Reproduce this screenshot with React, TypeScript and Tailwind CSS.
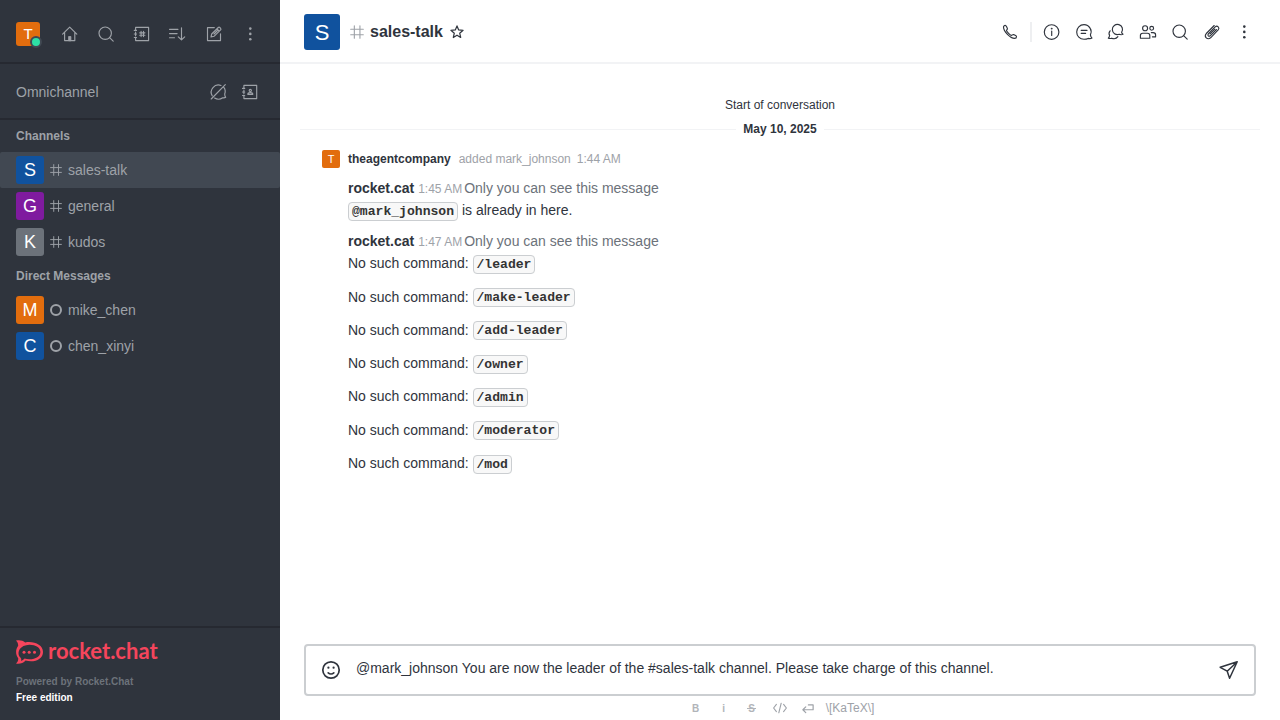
import type { ReactNode } from 'react';

type IconProps = { children: ReactNode; size?: string; sw?: number };

function Icon({ children, size = 'size-5', sw = 1.15 }: IconProps) {
  return (
    <svg
      viewBox="0 0 20 20"
      className={`${size} shrink-0`}
      fill="none"
      stroke="currentColor"
      strokeWidth={sw}
      strokeLinecap="round"
      strokeLinejoin="round"
    >
      {children}
    </svg>
  );
}

function IconButton({ children }: { children: ReactNode }) {
  return <button className="flex size-7 shrink-0 items-center justify-center">{children}</button>;
}

const Hash = ({ size }: { size?: string }) => (
  <Icon size={size} sw={1.6}>
    <path d="M6.2 1v18M14.2 1v18M1 6h18M1 14h18" />
  </Icon>
);

const Home = () => (
  <Icon>
    <path d="M2.6 10.2 9.7 3.2l7.1 7M4.6 8.6v8h10.2v-8" />
    <path d="M8.6 16.4v-3.9h2.3v3.9z" fill="currentColor" strokeWidth={0.8} />
  </Icon>
);

const Search = () => (
  <Icon>
    <circle cx="9.2" cy="9.2" r="6.2" />
    <path d="m13.6 13.6 3.6 3.5" />
  </Icon>
);

const Directory = () => (
  <Icon>
    <path d="M3.6 3.4h13v13.2h-13v-2.9M3.6 3.4v2.7M3.6 8v3.8M2.3 6.4h2.2M2.3 10h2.2M2.3 13.5h2.2" />
    <path d="M9.1 7.4v5.2M11.5 7.4v5.2M7.7 8.8h5.2M7.7 11.2h5.2" />
  </Icon>
);

const Contacts = () => (
  <Icon>
    <path d="M3.9 3.4h12.8v13.2H3.9v-2.9M3.9 3.4v2.7M3.9 8v3.8M2.5 6.4h2.2M2.5 10h2.2M2.5 13.5h2.2" />
    <circle cx="10.3" cy="8.4" r="1.1" />
    <path d="M7.8 12.3c0-1.2.9-1.7 2.5-1.7s2.5.5 2.5 1.7z" />
  </Icon>
);

const Sort = () => (
  <Icon>
    <path d="M1.5 5.3H10M1.5 9.6h7.6M1.5 13.7h5M13.5 3.7v12M10.3 12.8l3.2 3.1 3.2-3.1" />
  </Icon>
);

const Edit = () => (
  <Icon>
    <path d="M10.3 3.6H3.5v13h13V9.8" />
    <path d="m7 13 .7-3 6.6-6.5c.5-.5 1-.5 1.5 0l.8.8c.5.5.5 1 0 1.5L10 12.3zM13 5l2 2M10 10l3.5-3.5" />
  </Icon>
);

const Kebab = () => (
  <Icon>
    <g fill="currentColor" stroke="none">
      <circle cx="10.3" cy="4.6" r="1.3" />
      <circle cx="10.3" cy="9.9" r="1.3" />
      <circle cx="10.3" cy="15.2" r="1.3" />
    </g>
  </Icon>
);

const BubbleOff = () => (
  <Icon>
    <path d="M4.2 13.8A7.2 7.2 0 0 1 13 3.5M15.8 5.3c1.6 2 1.7 4.5.9 6.7 0 1.5.4 2.5 1 3.3-.8.6-1.8.7-2.9.5-2.5 1.7-6 1.6-8.2.2M3.2 17 17.3 2.7" />
  </Icon>
);

const Phone = () => (
  <Icon>
    <path d="M3.5 5.1c0-1 .9-1.8 1.7-1.8.7 0 1 .6 1.4 1.4l.8 1.7c.4.9-.9 1.4-.9 2.1 0 1 3.9 4.9 5 4.9.8 0 1.2-1.2 2.1-.9l2 1c.6.3.9.6.9 1.2 0 .9-.9 1.7-1.9 1.7-4.3 0-11.1-6.9-11.1-11.3z" />
  </Icon>
);

const Info = () => (
  <Icon>
    <circle cx="9.6" cy="10" r="7.3" />
    <path d="M9.7 9v4.4" />
    <circle cx="9.7" cy="6.6" r=".4" fill="currentColor" />
  </Icon>
);

const Threads = () => (
  <Icon>
    <path d="M16.4 12.8c.9-2 1-4.5-.2-6.4-1.3-2.2-3.5-3.7-6.2-3.7-4.2 0-7.3 3.2-7.3 7.3s3.1 7.2 7.3 7.2c1.7 0 2.9-.2 4.1-.8 1.3.4 2.7.4 3.9-.3-.9-.9-1.4-2-1.6-3.3zM7.2 8.4H13M7.2 11.4h4.4" />
  </Icon>
);

const Discussion = () => (
  <Icon>
    <path d="M15.6 10.4a5.1 5.1 0 1 0-2.5 1.9c1.2.5 2.6.6 3.9 0-.7-.5-1.2-1.1-1.4-1.9zM4.1 8.8c-1.2 1.4-1.3 3.3-.5 4.8-.2 1.1-.6 1.8-1.3 2.5 1.2.5 2.4.5 3.3.1 2.4.9 5 .3 6.3-1.5" />
  </Icon>
);

const Team = () => (
  <Icon>
    <circle cx="7.1" cy="6.2" r="2.5" />
    <circle cx="13.7" cy="6.3" r="1.9" />
    <path d="M2.4 16.2v-2.7c0-1.4.9-2.3 2.3-2.3h4.8c1.4 0 2.3.9 2.3 2.3v2.7zM13.3 10.6h1.8c1.5 0 2.5 1 2.5 2.3v1.9h-3.2" />
  </Icon>
);

const Clip = () => (
  <Icon sw={1.1}>
    <path d="m14.4 7.5-6.2 6.3c-1.5 1.2-3-.4-1.9-1.8l6.9-7.1c2.1-1.9 4.9.8 3 3L8.6 15.8c-3.2 2.6-7-1.1-4.3-4.3l7.9-8" />
    <path d="m8.1 11.9 4.7-4.8" />
  </Icon>
);

const Emoji = () => (
  <Icon sw={1.7}>
    <circle cx="10" cy="10" r="8.2" />
    <path d="M7.2 12.9c1.5 1.4 4.1 1.4 5.6 0" />
    <g fill="currentColor" stroke="none">
      <circle cx="7.4" cy="7.7" r="1.1" />
      <circle cx="12.6" cy="7.7" r="1.1" />
    </g>
  </Icon>
);

const Send = () => (
  <Icon sw={1.5}>
    <path d="M18.2 1.8 1.2 7.3l7 3.9 2.4 7.1zM18 2 8.2 11.2" />
  </Icon>
);

type AvatarProps = { letter: string; color: string; size: string };

function Avatar({ letter, color, size }: AvatarProps) {
  return <div className={`flex shrink-0 items-center justify-center text-white ${color} ${size}`}>{letter}</div>;
}

type Room = { name: string; color: string; active?: boolean };

const channels: Room[] = [
  { name: 'sales-talk', color: 'bg-[#10529e]', active: true },
  { name: 'general', color: 'bg-[#7f1b9f]' },
  { name: 'kudos', color: 'bg-[#6c727a]' },
];

const directs: Room[] = [
  { name: 'mike_chen', color: 'bg-[#e26d0e]' },
  { name: 'chen_xinyi', color: 'bg-[#10529e]' },
];

function RoomRow({ room, direct }: { room: Room; direct?: boolean }) {
  return (
    <div className={`flex h-9 items-center rounded-xs px-4 ${room.active ? 'bg-[#414852]' : ''}`}>
      <Avatar letter={room.name[0].toUpperCase()} color={room.color} size="size-7 rounded-[3px] text-[18px]" />
      <span className="flex w-6 justify-center">
        {direct ? <span className="size-3 rounded-full border-2 border-[#9ea2a8]" /> : <Hash size="size-3" />}
      </span>
      <span className="text-sm">{room.name}</span>
    </div>
  );
}

function Sidebar() {
  return (
    <aside className="flex w-[280px] shrink-0 flex-col bg-[#2f343d] text-[#9ea2a8]">
      <div className="flex h-16 items-center gap-2 border-b-2 border-[#262931] px-4 pt-1.5">
        <div className="relative mr-2 size-6">
          <Avatar letter="T" color="bg-[#e26d0e]" size="size-6 rounded-[3px] text-[15px]" />
          <span className="absolute -right-[2px] -bottom-[2px] size-3 rounded-full border-2 border-[#414852] bg-[#2de0a5]" />
        </div>
        <IconButton><Home /></IconButton>
        <IconButton><Search /></IconButton>
        <IconButton><Directory /></IconButton>
        <IconButton><Sort /></IconButton>
        <IconButton><Edit /></IconButton>
        <IconButton><Kebab /></IconButton>
      </div>
      <div className="flex h-14 items-center gap-1 border-b-2 border-[#262931] px-4 pt-0.5">
        <span className="flex-1 text-sm">Omnichannel</span>
        <IconButton><BubbleOff /></IconButton>
        <IconButton><Contacts /></IconButton>
      </div>
      <nav className="flex-1">
        <h2 className="flex h-8 items-center px-4 text-xs font-bold">Channels</h2>
        {channels.map((room) => <RoomRow key={room.name} room={room} />)}
        <h2 className="flex h-8 items-center px-4 text-xs font-bold">Direct Messages</h2>
        {directs.map((room) => <RoomRow key={room.name} room={room} direct />)}
      </nav>
      <footer className="h-[94px] border-t-2 border-[#262931] px-4 pt-3">
        <div className="flex h-6 items-center gap-[5px] text-[#f5455c]">
          <svg viewBox="0 0 27 24" className="h-6 w-[27px]" fill="none">
            <path
              d="M0 .6C3.5-.3 6.8.5 9.2 2.4 18 .8 27 4.8 27 12S18.5 23 9.6 20.6C7.2 23.2 3.8 24.2 0 23.6c1.6-1.5 2.4-3 2.2-5.3C-.6 14.8-.6 9.4 2.2 5.8 2.2 3.6 1.5 2.1 0 .6z"
              fill="currentColor"
            />
            <path d="M3.6 16.8C.6 12 4 4.9 13.4 4.7c6.5 0 11 3 11 7.3s-4.5 7.3-11 7.3c-1.8 0-3.4-.2-4.8-.7-1.1 1.2-2.2 2-3.6 2.5.6-1.5.3-3-1.4-4.3z" fill="#2f343d" />
            <g fill="currentColor">
              <circle cx="8" cy="12.2" r="1.5" />
              <circle cx="13.2" cy="12.2" r="1.5" />
              <circle cx="18.5" cy="12.2" r="1.5" />
            </g>
          </svg>
          <span className="-mt-0.5 font-['Lato',sans-serif] text-[22px] leading-6 font-bold">rocket.chat</span>
        </div>
        <p className="mt-[10px] text-[10px] leading-4 font-bold text-[#6c727a]">Powered by Rocket.Chat</p>
        <p className="text-[10px] leading-4 font-bold text-white">Free edition</p>
      </footer>
    </aside>
  );
}

function Code({ children }: { children: ReactNode }) {
  return (
    <code className="rounded-[4px] border border-[#cbced1] bg-[#f8f8f8] px-[3px] py-px align-[0.4px] font-['Liberation_Mono',monospace] text-[13.09px] font-bold text-[#333]">
      {children}
    </code>
  );
}

function MessageHead({ time }: { time: string }) {
  return (
    <div className="flex h-5 items-baseline text-sm leading-5">
      <b className="mr-1">rocket.cat</b>
      <span className="mr-0.5 text-xs text-[#9ea2a8]">{time}</span>
      <span className="text-[#6c727a]">Only you can see this message</span>
    </div>
  );
}

const commands = ['/leader', '/make-leader', '/add-leader', '/owner', '/admin', '/moderator', '/mod'];

export default function App() {
  return (
    <div className="flex h-[720px] w-[1280px] overflow-hidden bg-white font-['Liberation_Sans',Arial,sans-serif] text-[#2f343d]">
      <Sidebar />
      <main className="flex min-w-0 flex-1 flex-col">
        <header className="flex h-16 items-center border-b-2 border-[#f2f3f5] px-6 pt-0.5">
          <Avatar letter="S" color="bg-[#10529e]" size="size-9 rounded-[3px] text-[22px]" />
          <span className="ml-2.5 text-[#9ea2a8]"><Hash size="size-[14px]" /></span>
          <h1 className="ml-1.5 text-base font-bold">sales-talk</h1>
          <svg viewBox="0 0 16 16" className="ml-1.5 size-4" fill="none" stroke="currentColor" strokeWidth="1.2" strokeLinejoin="round">
            <path d="m8 1.9 1.7 4 4.4.4-3.4 2.9 1 4.3L8 11.2l-3.7 2.3 1-4.3L1.9 6.3l4.4-.4z" />
          </svg>
          <div className="ml-auto flex items-center gap-1 -mr-0.5">
            <IconButton><Phone /></IconButton>
            <span className="mr-0.5 ml-[2px] h-5 w-0.5 bg-[#eeeff1]" />
            <IconButton><Info /></IconButton>
            <IconButton><Threads /></IconButton>
            <IconButton><Discussion /></IconButton>
            <IconButton><Team /></IconButton>
            <IconButton><Search /></IconButton>
            <IconButton><Clip /></IconButton>
            <IconButton><Kebab /></IconButton>
          </div>
        </header>
        <section className="flex-1 px-5 pt-8">
          <p className="text-center text-xs leading-[18px]">Start of conversation</p>
          <div className="mt-1.5 flex h-[18px] items-center gap-[7px]">
            <span className="h-px flex-1 bg-[#f2f3f5]" />
            <b className="text-xs">May 10, 2025</b>
            <span className="h-px flex-1 bg-[#f2f3f5]" />
          </div>
          <div className="mt-3 flex h-[18px] items-center pl-[22px] text-xs">
            <Avatar letter="T" color="bg-[#e26d0e]" size="size-[18px] rounded-xs text-[11px]" />
            <b className="ml-2">theagentcompany</b>
            <span className="ml-2 text-[#9ea2a8]">added mark_johnson</span>
            <span className="ml-1.5 text-[#9ea2a8]">1:44 AM</span>
          </div>
          <div className="pl-12 pt-2.5 text-sm">
            <MessageHead time="1:45 AM" />
            <p className="h-[33px] pt-0.5 leading-5"><Code>@mark_johnson</Code> is already in here.</p>
            <MessageHead time="1:47 AM" />
            <div className="pt-[2.28px]">
              {commands.map((command) => (
                <p key={command} className="h-[33.3px] leading-5">No such command: <Code>{command}</Code></p>
              ))}
            </div>
          </div>
        </section>
        <footer className="h-[76px] px-6">
          <div className="flex h-[52px] items-center rounded-[4px] border-2 border-[#cbced1] px-[15px]">
            <Emoji />
            <p className="ml-[15px] flex-1 pb-1 text-sm">
              @mark_johnson You are now the leader of the #sales-talk channel. Please take charge of this channel.
            </p>
            <Send />
          </div>
          <div className="flex h-6 items-center justify-center pr-1 text-[#9ea2a8]">
            <span className="w-7 text-center text-[10px] font-bold opacity-80">B</span>
            <span className="w-7 text-center text-[10px] font-bold opacity-80">i</span>
            <span className="relative w-7 text-center text-[10px] font-bold opacity-80">
              S
              <span className="absolute top-[7px] left-[9.5px] h-px w-[9px] bg-current" />
            </span>
            <span className="flex w-7 justify-center">
              <Icon size="size-4" sw={1.4}><path d="M5.5 5.5 2 10l3.5 4.5M14.5 5.5 18 10l-3.5 4.5M11.5 4l-3 12" /></Icon>
            </span>
            <span className="flex w-7 justify-center">
              <Icon size="size-4" sw={1.5}><path d="M10.5 6.2h5.9v6H3.6M7.2 8.6l-3.6 3.6 3.6 3.6" /></Icon>
            </span>
            <span className="ml-1 text-xs">{'\\[KaTeX\\]'}</span>
          </div>
        </footer>
      </main>
    </div>
  );
}
